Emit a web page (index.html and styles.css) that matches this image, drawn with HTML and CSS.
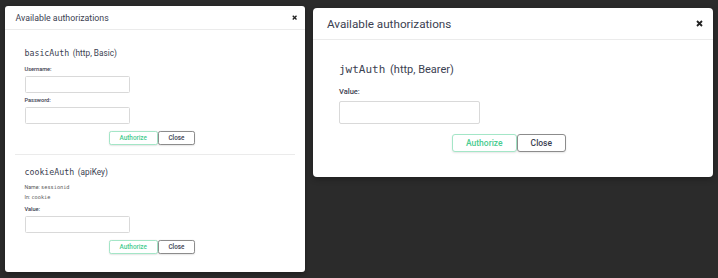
FILE: index.html
```html
<!DOCTYPE html>
<html>
<head>
    <title>Available authorizations</title>
    <link rel="stylesheet" href="styles.css">
</head>
<body>
    <div class="modal modal-small">
        <div class="modal-header">
            <h3>Available authorizations</h3>
            <button class="close-modal" aria-label="Close">
                <svg width="7" height="7" viewBox="0 0 7 7"><path d="M1 1 L6 6 M6 1 L1 6" stroke="#222" stroke-width="1.8"/></svg>
            </button>
        </div>
        <div class="modal-body">
            <div class="auth-container">
                <h4><code>basicAuth</code> (http, Basic)</h4>
                <label>Username:</label>
                <input type="text">
                <label>Password:</label>
                <input type="password">
                <div class="auth-btn-wrapper">
                    <button class="btn authorize">Authorize</button>
                    <button class="btn">Close</button>
                </div>
            </div>
            <div class="auth-container">
                <h4><code>cookieAuth</code> (apiKey)</h4>
                <p class="key-info">Name: <code>sessionid</code></p>
                <p class="key-info">In: <code>cookie</code></p>
                <label class="after-info">Value:</label>
                <input type="text">
                <div class="auth-btn-wrapper">
                    <button class="btn authorize">Authorize</button>
                    <button class="btn">Close</button>
                </div>
            </div>
        </div>
    </div>

    <div class="modal modal-large">
        <div class="modal-header">
            <h3>Available authorizations</h3>
            <button class="close-modal" aria-label="Close">
                <svg width="7" height="7" viewBox="0 0 7 7"><path d="M1 1 L6 6 M6 1 L1 6" stroke="#222" stroke-width="1.8"/></svg>
            </button>
        </div>
        <div class="modal-body">
            <div class="auth-container">
                <h4><code>jwtAuth</code> (http, Bearer)</h4>
                <label>Value:</label>
                <input type="text">
                <div class="auth-btn-wrapper">
                    <button class="btn authorize">Authorize</button>
                    <button class="btn">Close</button>
                </div>
            </div>
        </div>
    </div>
</body>
</html>
```

FILE: styles.css
```css
body {
    background: #2b2b2b;
    margin: 0;
    padding: 6px 5px;
    display: flex;
    align-items: flex-start;
    gap: 8px;
    font-family: 'Roboto', 'Liberation Sans', sans-serif;
    color: #3b4151;
}
.modal {
    background: #fff;
    width: 400px;
    border-radius: 4px;
    box-shadow: 0 2px 6px rgba(0, 0, 0, 0.3);
}
.modal-small {
    zoom: 0.75;
}
.modal-large {
    margin-top: 2px;
}
.modal-header {
    height: 31px;
    border-bottom: 1px solid #ebebeb;
    padding: 0 10px 0 14px;
    display: flex;
    align-items: center;
    justify-content: space-between;
}
.modal-header h3 {
    margin: 0;
    font-size: 11.7px;
    font-weight: 400;
    color: #3b4151;
}
.close-modal {
    border: none;
    background: none;
    padding: 0;
    width: 7px;
    height: 7px;
    display: flex;
}
.modal-body {
    padding: 7px 13px 13px;
}
.auth-container {
    padding: 15px 13px 12px;
    border-bottom: 1px solid #ebebeb;
}
.auth-container:last-child {
    border-bottom: none;
}
.auth-container h4 {
    margin: 0 0 8px;
    font-size: 11px;
    line-height: 16px;
    font-weight: 400;
}
code {
    font-family: 'DejaVu Sans Mono', 'Liberation Mono', monospace;
    margin-right: 2px;
}
label {
    display: block;
    font-size: 7.5px;
    line-height: 11px;
    font-weight: 500;
    color: #3b4151;
}
input {
    display: block;
    box-sizing: border-box;
    width: 141px;
    height: 23px;
    margin: 4px 0 3px;
    border: 1px solid #d9d9d9;
    border-radius: 2px;
}
.key-info {
    margin: 0;
    font-size: 7px;
    line-height: 13px;
    color: #555;
}
.key-info code {
    font-size: 7px;
    margin: 0;
}
.auth-container h4 + .key-info {
    margin-top: -1px;
}
.after-info {
    margin-top: 2.5px;
}
.auth-btn-wrapper {
    display: flex;
    justify-content: center;
    padding-right: 8px;
    margin-top: 9.5px;
}
.btn {
    box-sizing: border-box;
    height: 18px;
    padding: 0 13px;
    background: #fff;
    border: 1.5px solid #8c8c8c;
    border-radius: 3px;
    font-family: 'Roboto', 'Liberation Sans', sans-serif;
    font-size: 8.5px;
    font-weight: 500;
    color: #3b4151;
    box-shadow: 0 1px 2px rgba(0, 0, 0, 0.1);
}
.btn.authorize {
    border-color: #a4e6c7;
    color: #49cc90;
}
```
